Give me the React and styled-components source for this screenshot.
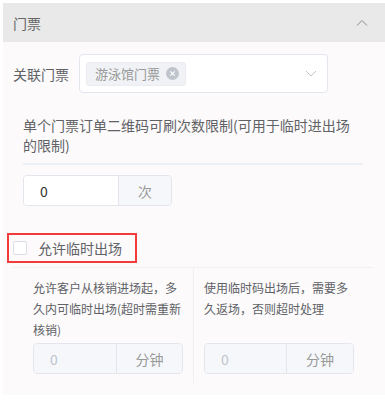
import React from "react";
import styled, { createGlobalStyle } from "styled-components";

const GlobalStyle = createGlobalStyle`
  *, *::before, *::after {
    box-sizing: border-box;
  }
  html, body {
    margin: 0;
    padding: 0;
    background: #ffffff;
  }
  body {
    font-family: "Noto Sans CJK SC", "Noto Sans", sans-serif;
    color: #606266;
  }
`;

const Panel = styled.div`
  margin: 3px 0 0 3px;
  width: 382px;
  background: #fcfafb;
  padding-bottom: 12px;
`;

const Header = styled.div`
  height: 39px;
  display: flex;
  align-items: center;
  justify-content: space-between;
  padding: 0 17px 0 10px;
  background: #e9e9e9;
  font-size: 14px;
  color: #666;
`;

const FieldRow = styled.div`
  display: flex;
  align-items: center;
  gap: 10px;
  padding: 12px 0 0 10px;
`;

const Label = styled.span`
  font-size: 14px;
  color: #606266;
  white-space: nowrap;
`;

const Select = styled.div`
  width: 249px;
  height: 39px;
  display: flex;
  align-items: center;
  justify-content: space-between;
  padding: 0 10px 0 6px;
  background: #fff;
  border: 1px solid #e4e6ee;
  border-radius: 4px;
`;

const Tag = styled.span`
  display: inline-flex;
  align-items: center;
  gap: 6px;
  height: 24px;
  padding: 0 6px 0 8px;
  background: #f0f2f5;
  border: 1px solid #eaecf0;
  border-radius: 3px;
  font-size: 13px;
  color: #999;
`;

const Section = styled.div`
  padding: ${(p) => p.$pad || "0 0 0 20px"};
`;

const Paragraph = styled.p`
  margin: 0;
  width: ${(p) => p.$width || "330px"};
  font-size: ${(p) => p.$size || "14px"};
  line-height: ${(p) => p.$lh || "20px"};
  color: #606266;
`;

const Divider = styled.div`
  height: ${(p) => p.$h || "1px"};
  width: ${(p) => p.$w};
  margin: ${(p) => p.$m};
  background: ${(p) => p.$c || "#eff0f5"};
`;

const InputGroup = styled.div`
  display: flex;
  width: ${(p) => p.$w || "149px"};
  height: 31px;
  border: 1px solid #e4e6ee;
  border-radius: 4px;
  overflow: hidden;
  font-size: 14px;
`;

const InputPart = styled.div`
  width: ${(p) => p.$w};
  display: flex;
  align-items: center;
  padding-left: 16px;
  background: ${(p) => (p.$disabled ? "#f5f7fa" : "#fff")};
  color: ${(p) => (p.$disabled ? "#c0c4cc" : "#333")};
  border-right: 1px solid #e4e6ee;
`;

const Addon = styled.div`
  flex: 1;
  display: flex;
  align-items: center;
  justify-content: center;
  background: #f5f7fa;
  color: #999;
`;

const Highlight = styled.div`
  width: 130px;
  height: 30px;
  margin: 27px 0 0 4px;
  display: flex;
  align-items: center;
  gap: 11px;
  padding-left: 4px;
  border: 2px solid #f23a3a;
  font-size: 14px;
  color: #606266;
`;

const Checkbox = styled.span`
  width: 14px;
  height: 14px;
  background: #fff;
  border: 1px solid #dcdfe6;
  border-radius: 2px;
`;

const Columns = styled.div`
  display: flex;
  margin-left: 20px;
  width: 350px;
`;

const Column = styled.div`
  width: ${(p) => p.$w};
  padding: 9px 0 9px 10px;
  border-left: ${(p) => (p.$line ? "1px solid #efeff2" : "none")};
  display: flex;
  flex-direction: column;
  gap: 3px;
`;

const Spacer = styled.div`
  flex: 1;
`;

const CloseIcon = () => (
  <svg width="13" height="13" viewBox="0 0 13 13">
    <circle cx="6.5" cy="6.5" r="6.5" fill="#c0c4cc" />
    <path d="M4.3 4.3l4.4 4.4M8.7 4.3l-4.4 4.4" stroke="#fff" strokeWidth="1.1" />
  </svg>
);

const Chevron = ({ up }) => (
  <svg width="12" height="7" viewBox="0 0 12 7">
    <path
      d={up ? "M1 6.5L6 1.5l5 5" : "M1 1l5 5 5-5"}
      fill="none"
      stroke={up ? "#888" : "#c0c4cc"}
      strokeWidth="1"
    />
  </svg>
);

const App = () => {
  return (
    <>
      <GlobalStyle />
      <Panel>
        <Header>
          <span>门票</span>
          <Chevron up />
        </Header>

        <FieldRow>
          <Label>关联门票</Label>
          <Select>
            <Tag>
              游泳馆门票
              <CloseIcon />
            </Tag>
            <Chevron />
          </Select>
        </FieldRow>

        <Section $pad="22px 0 0 20px">
          <Paragraph>
            单个门票订单二维码可刷次数限制(可用于临时进出场的限制)
          </Paragraph>
          <Divider $h="2px" $w="340px" $m="8px 0 10px 0" $c="#eef0f7" />
          <InputGroup>
            <InputPart $w="95px">0</InputPart>
            <Addon>次</Addon>
          </InputGroup>
        </Section>

        <Highlight>
          <Checkbox />
          允许临时出场
        </Highlight>

        <Divider $w="360px" $m="4px 0 0 10px" $c="#f0f0f3" />

        <Columns>
          <Column $w="170px">
            <Paragraph $width="150px" $size="12px" $lh="21px">
              允许客户从核销进场起，多久内可临时出场(超时需重新核销)
            </Paragraph>
            <InputGroup $w="150px">
              <InputPart $w="83px" $disabled>0</InputPart>
              <Addon>分钟</Addon>
            </InputGroup>
          </Column>
          <Column $w="180px" $line>
            <Paragraph $width="150px" $size="12px" $lh="21px">
              使用临时码出场后，需要多久返场，否则超时处理
            </Paragraph>
            <Spacer />
            <InputGroup $w="150px">
              <InputPart $w="82px" $disabled>0</InputPart>
              <Addon>分钟</Addon>
            </InputGroup>
          </Column>
        </Columns>
      </Panel>
    </>
  );
};

export default App;
